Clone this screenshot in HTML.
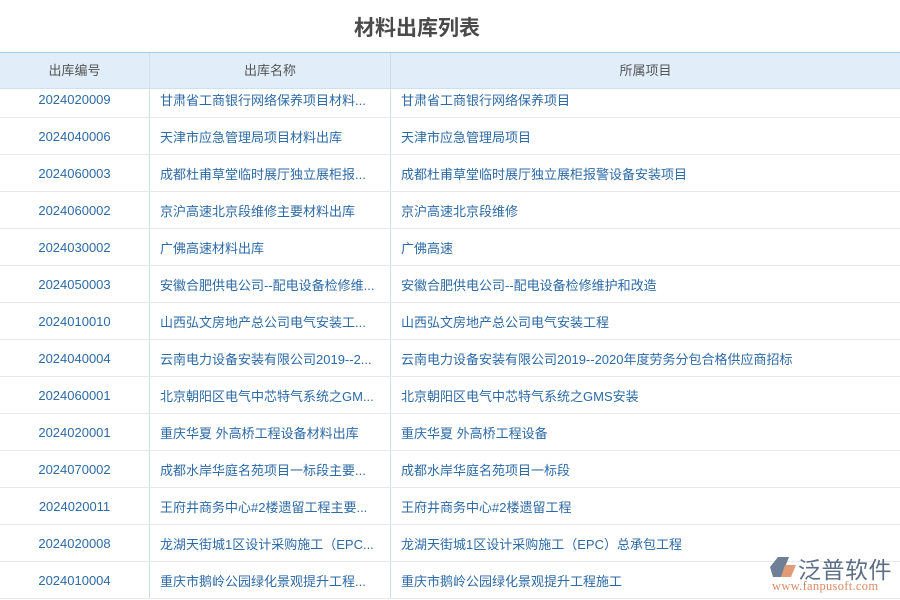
<!DOCTYPE html>
<html><head><meta charset="utf-8"><style>
body{margin:0;width:900px;height:600px;overflow:hidden;background:#fff;font-family:"Liberation Sans","Noto Sans CJK SC",sans-serif;position:relative}
.title{position:absolute;top:12px;left:0;width:834px;text-align:center;font-size:21px;font-weight:bold;color:#4a4a4a}
.hdr{position:absolute;top:52px;left:0;width:900px;height:37px;background:#e1eefa;border-top:1px solid #a8cbe6;border-bottom:1px solid #cfe0ef;z-index:2;box-sizing:border-box}
.c{position:absolute;top:0;height:100%;box-sizing:border-box;border-right:1px solid #cfdeeb;font-size:13px;line-height:39px;white-space:nowrap;overflow:hidden}
.c1{left:0;width:150px;text-align:center}
.c2{left:150px;width:241px;padding-left:10px}
.c3{left:391px;width:509px;padding-left:10px;border-right:none}
.hdr .c{color:#555;text-align:center;padding:0;line-height:35px}
.row{position:absolute;left:0;width:900px;height:37px;border-bottom:1px solid #e6e9ee;box-sizing:border-box;color:#2d6aa6}
.row .c1{font-family:"Liberation Sans",sans-serif;line-height:37px}
.logo{position:absolute;left:768px;top:552px;z-index:3}
</style></head><body>
<div class="title">材料出库列表</div>
<div class="hdr"><div class="c c1">出库编号</div><div class="c c2">出库名称</div><div class="c c3">所属项目</div></div>
<div class="row" style="top:81px"><div class="c c1">2024020009</div><div class="c c2">甘肃省工商银行网络保养项目材料...</div><div class="c c3">甘肃省工商银行网络保养项目</div></div>
<div class="row" style="top:118px"><div class="c c1">2024040006</div><div class="c c2">天津市应急管理局项目材料出库</div><div class="c c3">天津市应急管理局项目</div></div>
<div class="row" style="top:155px"><div class="c c1">2024060003</div><div class="c c2">成都杜甫草堂临时展厅独立展柜报...</div><div class="c c3">成都杜甫草堂临时展厅独立展柜报警设备安装项目</div></div>
<div class="row" style="top:192px"><div class="c c1">2024060002</div><div class="c c2">京沪高速北京段维修主要材料出库</div><div class="c c3">京沪高速北京段维修</div></div>
<div class="row" style="top:229px"><div class="c c1">2024030002</div><div class="c c2">广佛高速材料出库</div><div class="c c3">广佛高速</div></div>
<div class="row" style="top:266px"><div class="c c1">2024050003</div><div class="c c2">安徽合肥供电公司--配电设备检修维...</div><div class="c c3">安徽合肥供电公司--配电设备检修维护和改造</div></div>
<div class="row" style="top:303px"><div class="c c1">2024010010</div><div class="c c2">山西弘文房地产总公司电气安装工...</div><div class="c c3">山西弘文房地产总公司电气安装工程</div></div>
<div class="row" style="top:340px"><div class="c c1">2024040004</div><div class="c c2">云南电力设备安装有限公司2019--2...</div><div class="c c3">云南电力设备安装有限公司2019--2020年度劳务分包合格供应商招标</div></div>
<div class="row" style="top:377px"><div class="c c1">2024060001</div><div class="c c2">北京朝阳区电气中芯特气系统之GM...</div><div class="c c3">北京朝阳区电气中芯特气系统之GMS安装</div></div>
<div class="row" style="top:414px"><div class="c c1">2024020001</div><div class="c c2">重庆华夏 外高桥工程设备材料出库</div><div class="c c3">重庆华夏 外高桥工程设备</div></div>
<div class="row" style="top:451px"><div class="c c1">2024070002</div><div class="c c2">成都水岸华庭名苑项目一标段主要...</div><div class="c c3">成都水岸华庭名苑项目一标段</div></div>
<div class="row" style="top:488px"><div class="c c1">2024020011</div><div class="c c2">王府井商务中心#2楼遗留工程主要...</div><div class="c c3">王府井商务中心#2楼遗留工程</div></div>
<div class="row" style="top:525px"><div class="c c1">2024020008</div><div class="c c2">龙湖天街城1区设计采购施工（EPC...</div><div class="c c3">龙湖天街城1区设计采购施工（EPC）总承包工程</div></div>
<div class="row" style="top:562px"><div class="c c1">2024010004</div><div class="c c2">重庆市鹅岭公园绿化景观提升工程...</div><div class="c c3">重庆市鹅岭公园绿化景观提升工程施工</div></div>
<div class="logo">
<svg width="26" height="22" style="position:absolute;left:2px;top:4px"><polygon points="8,1 19,1 11,21 3,21 0,11" fill="#6f7f96"/><polygon points="15,9 26,9 21,21 11,21" fill="#e29b77"/></svg>
<div style="position:absolute;left:30px;top:-1px;font-size:23px;color:#5d6f86;white-space:nowrap;letter-spacing:0.5px">泛普软件</div>
<div style="position:absolute;left:4px;top:27px;font-size:12.5px;color:#d98a64;font-family:'Liberation Serif',serif;white-space:nowrap;letter-spacing:0.3px">www.fanpusoft.com</div>
</div>
</body></html>
